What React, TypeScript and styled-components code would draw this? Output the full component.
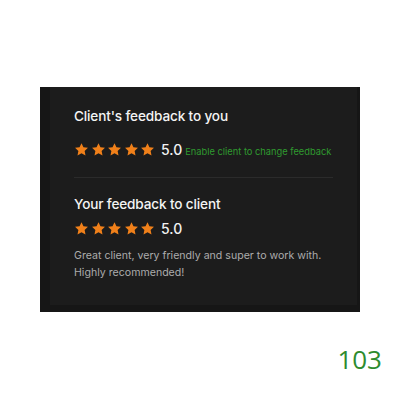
import { createGlobalStyle, styled } from "styled-components";

const GlobalStyle = createGlobalStyle`
  html, body {
    margin: 0;
    background: #ffffff;
  }
  body {
    font-family: Inter, "Liberation Sans", Arial, sans-serif;
  }
`;

const Page = styled.div`
  width: 400px;
  height: 400px;
  padding: 87px 0 0 40px;
  box-sizing: border-box;
  display: flex;
  flex-direction: column;
`;

const Frame = styled.div`
  width: 320px;
  height: 225px;
  background: #161616;
  padding: 0 3px 7px 10px;
  box-sizing: border-box;
  display: flex;
`;

const Card = styled.div`
  flex: 1;
  background: #1c1c1c;
  padding: 20px 22px 0 24px;
  display: flex;
  flex-direction: column;
`;

const Section = styled.section`
  display: flex;
  flex-direction: column;
`;

const Title = styled.h2`
  margin: 0;
  font-size: 13.6px;
  font-weight: 500;
  color: #f4f4f4;
  line-height: 18px;
  letter-spacing: -0.15px;
`;

const RatingRow = styled.div<{ $top: number }>`
  display: flex;
  align-items: center;
  white-space: nowrap;
  margin-top: ${(p) => p.$top}px;
`;

const Stars = styled.div`
  display: flex;
  gap: 1.5px;
`;

const Score = styled.span`
  margin-left: 6px;
  font-size: 14px;
  font-weight: 500;
  color: #f2f2f2;
`;

const EnableLink = styled.span`
  margin-left: 3px;
  margin-top: 3px;
  font-size: 9.3px;
  color: #2f9a2f;
`;

const Divider = styled.hr`
  border: 0;
  height: 1px;
  background: #2b2b2b;
  margin: 19px 2px 17px 0;
`;

const Comment = styled.p`
  margin: 10px 0 0;
  font-size: 10.6px;
  line-height: 17px;
  color: #acacac;
`;

const PageNumber = styled.div`
  align-self: flex-end;
  margin: 29px 18px 0 0;
  font-family: "Open Sans", sans-serif;
  font-size: 26px;
  color: #2e8b2e;
`;

function Star() {
  return (
    <svg width="15" height="15" viewBox="0 0 24 24">
      <path
        d="M12 1.8l3.1 6.6 7.2.9-5.3 5 1.4 7.1L12 17.9l-6.4 3.5 1.4-7.1-5.3-5 7.2-.9z"
        fill="#f0801a"
      />
    </svg>
  );
}

function Rating({ top, children }: { top: number; children?: React.ReactNode }) {
  return (
    <RatingRow $top={top}>
      <Stars>
        {[0, 1, 2, 3, 4].map((i) => (
          <Star key={i} />
        ))}
      </Stars>
      <Score>5.0</Score>
      {children}
    </RatingRow>
  );
}

export default function App() {
  return (
    <>
      <GlobalStyle />
      <Page>
        <Frame>
          <Card>
            <Section>
              <Title>Client's feedback to you</Title>
              <Rating top={16}>
                <EnableLink>Enable client to change feedback</EnableLink>
              </Rating>
            </Section>
            <Divider />
            <Section>
              <Title>Your feedback to client</Title>
              <Rating top={7} />
              <Comment>
                Great client, very friendly and super to work with.
                <br />
                Highly recommended!
              </Comment>
            </Section>
          </Card>
        </Frame>
        <PageNumber>103</PageNumber>
      </Page>
    </>
  );
}
